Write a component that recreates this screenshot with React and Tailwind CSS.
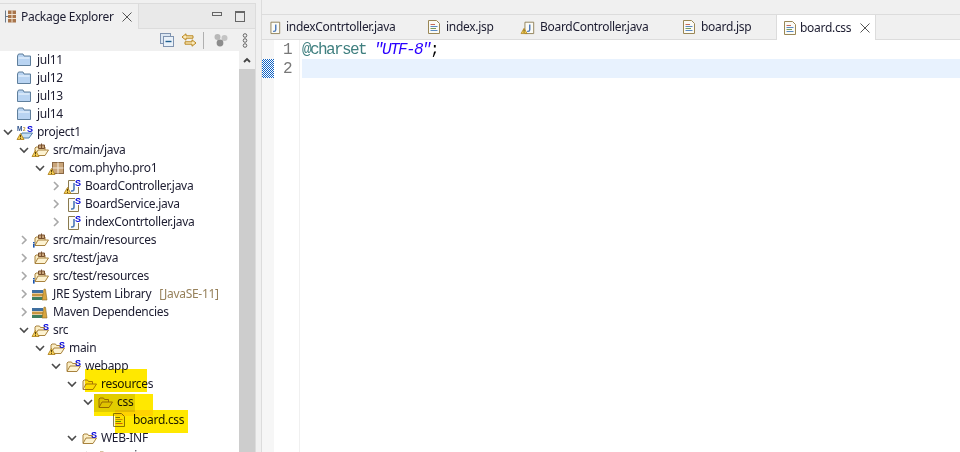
import React from "react";

const uiFont = "font-['Noto_Sans','Liberation_Sans',sans-serif]";

// decorators on the tree icons
const SBadge = ({ x = 11, y = 8 }) => (
  <text x={x} y={y} fontSize="9" fontWeight="700" fill="#0000d8" fontFamily="Liberation Sans, sans-serif">S</text>
);

const Warn = ({ x = 0, y = 9 }) => (
  <g transform={`translate(${x} ${y})`}>
    <path d="M3.5 0.5 L7 6.5 H0 Z" fill="#f5cf55" stroke="#a87a14" strokeWidth="0.8" />
    <path d="M3.5 2 V4.4 M3.5 5 V5.9" stroke="#4a3400" strokeWidth="0.9" />
  </g>
);

const Info = () => (
  <g>
    <rect x="1" y="10" width="1.6" height="1.4" fill="#1a55b0" />
    <rect x="1" y="12" width="1.6" height="3.6" fill="#1a55b0" />
  </g>
);

const FolderClosed = () => (
  <svg width="16" height="16" viewBox="0 0 16 16">
    <path d="M1.5 4 L2.5 2 H7 L8 4 H14.5 V13.5 H1.5 Z" fill="#b9d4f2" stroke="#5f7f9c" strokeWidth="1" />
    <rect x="2.5" y="5" width="11" height="2" fill="#d6e7f9" />
  </svg>
);

const FolderOpen = ({ s, warn, info }) => (
  <svg width="20" height="16" viewBox="0 0 20 16" className="overflow-visible">
    <path d="M3 13 V5 L4 4 H7.5 L8.5 5.5 H12.5 V8" fill="#fbeec5" stroke="#a8823e" strokeWidth="1" />
    <path d="M3 13.5 L6 8 H16.5 L13 13.5 Z" fill="#fdf3d2" stroke="#a8823e" strokeWidth="1" />
    {s && <SBadge />}
    {warn && <Warn x={0} y={8} />}
    {info && <Info />}
  </svg>
);

const SourceFolder = ({ warn, info }) => (
  <svg width="20" height="16" viewBox="0 0 20 16" className="overflow-visible">
    <path d="M3 13 V6 L4 5 H13 V8" fill="#fbeec5" stroke="#a8823e" strokeWidth="1" />
    <path d="M3 13.5 L6 8 H16.5 L13 13.5 Z" fill="#fdf3d2" stroke="#a8823e" strokeWidth="1" />
    <path d="M6.5 3 H12.5 V6.5 H6.5 Z M9.5 1.5 V6.5" fill="#c9a57a" stroke="#7a5230" strokeWidth="1" />
    {warn && <Warn x={0} y={8} />}
    {info && <Info />}
  </svg>
);

const PackageIcon = () => (
  <svg width="20" height="16" viewBox="0 0 20 16" className="overflow-visible">
    <rect x="4.5" y="2.5" width="11" height="11" fill="#c9a57a" stroke="#8a6844" strokeWidth="1" />
    <path d="M10 2.5 V13.5 M4.5 8 H15.5" stroke="#f2e6d6" strokeWidth="1.2" />
    <Warn x={0} y={8} />
  </svg>
);

const ProjectIcon = () => (
  <svg width="20" height="16" viewBox="0 0 20 16" className="overflow-visible">
    <text x="1" y="7" fontSize="6.5" fontWeight="700" fill="#2b4f8a" fontFamily="Liberation Sans, sans-serif">M</text>
    <text x="7" y="7" fontSize="4.5" fontWeight="700" fill="#b8861f" fontFamily="Liberation Sans, sans-serif">2</text>
    <path d="M3 14 L6 9 H16.5 L13 14 Z" fill="#c7dff5" stroke="#4f7ea8" strokeWidth="1" />
    <SBadge />
    <Warn x={1} y={9} />
  </svg>
);

const JavaFile = ({ warn, badge = true, w = 16 }) => (
  <svg width={w} height="16" viewBox="0 0 16 16" className="overflow-visible">
    <path d="M4.5 2.5 H14.5 V15.5 H4.5 Z" fill="#fbfbf6" stroke="#8a7a4f" strokeWidth="1" />
    <path d="M10 5 V11 Q10 13 8 13 H7" fill="none" stroke="#4a77b8" strokeWidth="1.6" />
    {badge && <rect x="11" y="1" width="5" height="8" fill="#ffffff" />}
    {badge && <SBadge />}
    {warn && <Warn x={0} y={9} />}
  </svg>
);

const TextFile = () => (
  <svg width="14" height="16" viewBox="0 0 14 16">
    <path d="M1.5 1.5 H9.5 L12.5 4.5 V14.5 H1.5 Z" fill="#fbfbf6" stroke="#9a8756" strokeWidth="1" />
    <path d="M3.5 5.5 H8" stroke="#c46a5a" strokeWidth="1" />
    <path d="M3.5 7.5 H10.5" stroke="#5a8ac4" strokeWidth="1" />
    <path d="M3.5 9.5 H9" stroke="#7a9a5a" strokeWidth="1" />
    <path d="M3.5 11.5 H10.5" stroke="#5a8ac4" strokeWidth="1" />
  </svg>
);

const CssFile = () => (
  <svg width="14" height="16" viewBox="0 0 14 16">
    <path d="M1.5 1.5 H9.5 L12.5 4.5 V14.5 H1.5 Z" fill="#fbf7da" stroke="#8a8256" strokeWidth="1" />
    <path d="M3.5 5.5 H8" stroke="#7a7a4a" strokeWidth="1" />
    <path d="M3.5 7.5 H10.5" stroke="#c79a2a" strokeWidth="1" />
    <path d="M3.5 9.5 H9" stroke="#5aa04a" strokeWidth="1" />
    <path d="M3.5 11.5 H10.5" stroke="#d06a3a" strokeWidth="1" />
  </svg>
);

const Library = () => (
  <svg width="18" height="16" viewBox="0 0 18 16" className="overflow-visible">
    <rect x="0" y="11" width="11" height="3" fill="#3f7f5f" />
    <rect x="0" y="7.5" width="11" height="3" fill="#c9963f" />
    <rect x="0" y="4" width="11" height="3" fill="#3f6f9f" />
    <path d="M10 14 L12 3 L13.5 3.3 L15 14 Z" fill="#d9a53f" stroke="#8a6a1f" strokeWidth="0.6" />
  </svg>
);

const ChevronDown = () => (
  <svg width="10" height="10" viewBox="0 0 10 10">
    <path d="M1 3 L5 7 L9 3" fill="none" stroke="#4a4a4a" strokeWidth="1.6" />
  </svg>
);

const ChevronRight = () => (
  <svg width="10" height="10" viewBox="0 0 10 10">
    <path d="M3 1 L7 5 L3 9" fill="none" stroke="#a8a8a8" strokeWidth="1.6" />
  </svg>
);

const treeRows = [
  { label: "jul11", level: 0, icon: <FolderClosed /> },
  { label: "jul12", level: 0, icon: <FolderClosed /> },
  { label: "jul13", level: 0, icon: <FolderClosed /> },
  { label: "jul14", level: 0, icon: <FolderClosed /> },
  { label: "project1", level: 0, open: true, icon: <ProjectIcon /> },
  { label: "src/main/java", level: 1, open: true, icon: <SourceFolder warn /> },
  { label: "com.phyho.pro1", level: 2, open: true, icon: <PackageIcon /> },
  { label: "BoardController.java", level: 3, closed: true, icon: <JavaFile warn /> },
  { label: "BoardService.java", level: 3, closed: true, icon: <JavaFile /> },
  { label: "indexContrtoller.java", level: 3, closed: true, icon: <JavaFile /> },
  { label: "src/main/resources", level: 1, closed: true, icon: <SourceFolder info /> },
  { label: "src/test/java", level: 1, closed: true, icon: <SourceFolder /> },
  { label: "src/test/resources", level: 1, closed: true, icon: <SourceFolder info /> },
  { label: "JRE System Library", extra: "[JavaSE-11]", level: 1, closed: true, icon: <Library /> },
  { label: "Maven Dependencies", level: 1, closed: true, icon: <Library /> },
  { label: "src", level: 1, open: true, icon: <FolderOpen s warn /> },
  { label: "main", level: 2, open: true, icon: <FolderOpen s warn /> },
  { label: "webapp", level: 3, open: true, icon: <FolderOpen s /> },
  { label: "resources", level: 4, open: true, icon: <FolderOpen /> },
  { label: "css", level: 5, open: true, icon: <FolderOpen /> },
  { label: "board.css", level: 6, icon: <CssFile /> },
  { label: "WEB-INF", level: 4, open: true, icon: <FolderOpen s /> },
  { label: "spring", level: 5, closed: true, icon: <FolderOpen /> },
];

const TreeRow = ({ row }) => (
  <div className="flex h-[18px] shrink-0 items-center" style={{ paddingLeft: row.level * 16 + 3 }}>
    <span className="flex w-[13px] shrink-0 justify-start">
      {row.open && <ChevronDown />}
      {row.closed && <ChevronRight />}
    </span>
    <span className="flex w-[21px] shrink-0 items-center justify-start">{row.icon}</span>
    <span className="whitespace-nowrap text-[12px] leading-[18px] tracking-[-0.3px] text-[#1c1c30]">
      {row.label}
      {row.extra && <span className="ml-[8px] text-[#96805a]">{row.extra}</span>}
    </span>
  </div>
);

const editorTabs = [
  { label: "indexContrtoller.java", width: "w-[160px]", icon: <JavaFile badge={false} w={14} /> },
  { label: "index.jsp", width: "w-[94px]", icon: <TextFile /> },
  { label: "BoardController.java", width: "w-[161px]", icon: <JavaFile badge={false} warn w={14} /> },
  { label: "board.jsp", width: "w-[99px]", icon: <TextFile /> },
];

const CloseIcon = ({ size = 10 }) => (
  <svg width={size} height={size} viewBox="0 0 10 10">
    <path d="M0.5 0.5 L9.5 9.5 M9.5 0.5 L0.5 9.5" stroke="#555555" strokeWidth="1" />
  </svg>
);

export default function App() {
  return (
    <div className={`flex h-[452px] w-[960px] overflow-hidden bg-[#f0f0f0] ${uiFont}`}>
      {/* Package Explorer */}
      <aside className="flex w-[256px] shrink-0 flex-col pt-[3px]">
        <div className="flex h-[26px] shrink-0 border-y border-r border-[#dcdcdc] bg-[#e9e9e9]">
          <div className="-mb-px flex w-[139px] shrink-0 items-center border-r border-[#dcdcdc] bg-[#f0f0f0] pl-[5px]">
            <svg width="11" height="13" viewBox="0 0 11 13" className="shrink-0">
              <path d="M0.5 0.5 V12.5 M0.5 6.5 H3" stroke="#6a7a8a" strokeWidth="1" />
              <rect x="3" y="0.5" width="8" height="12" fill="#a8744a" />
              <path d="M7 0.5 V12.5 M3 4.5 H11 M3 8.5 H11" stroke="#f0e4d4" strokeWidth="1" />
            </svg>
            <span className="ml-[5px] whitespace-nowrap text-[12px] tracking-[-0.3px] text-[#1c1c30]">Package Explorer</span>
            <span className="ml-[8px]"><CloseIcon /></span>
          </div>
          <div className="flex flex-1 items-start gap-[13px] pl-[73px] pt-[7px]">
            <div className="mt-[1px] h-[4px] w-[10px] border border-[#666666]" />
            <div className="h-[11px] w-[10px] border border-[#666666] border-t-2" />
          </div>
        </div>

        <div className="flex h-[22px] shrink-0 items-center border-r border-[#dcdcdc] pl-[160px]">
          <svg width="14" height="14" viewBox="0 0 14 14">
            <rect x="0.5" y="0.5" width="10" height="10" fill="#dbe6f2" stroke="#7f93b0" />
            <rect x="3.5" y="3.5" width="10" height="10" fill="#e9f1f9" stroke="#7f93b0" />
            <path d="M5.5 8.5 H11.5" stroke="#1f5f8f" strokeWidth="1.4" />
          </svg>
          <svg width="16" height="14" viewBox="0 0 16 14" className="ml-[7px]">
            <path d="M1 4 L5 0.8 V2.8 H12 V5.2 H5 V7.2 Z" fill="#fbe9b8" stroke="#b8861f" strokeWidth="1" />
            <path d="M15 10 L11 6.8 V8.8 H4 V11.2 H11 V13.2 Z" fill="#fbe9b8" stroke="#b8861f" strokeWidth="1" />
          </svg>
          <div className="ml-[6px] h-[17px] w-px bg-[#b0b0b0]" />
          <svg width="14" height="14" viewBox="0 0 14 14" className="ml-[10px]">
            <circle cx="3.5" cy="4" r="3" fill="#b8b8b8" />
            <circle cx="10.5" cy="5" r="3" fill="#c4c4c4" />
            <circle cx="6" cy="10" r="3.4" fill="#8c8c8c" />
          </svg>
          <svg width="6" height="15" viewBox="0 0 6 15" className="ml-[14px]">
            <circle cx="3" cy="2.5" r="1.8" fill="none" stroke="#666666" />
            <circle cx="3" cy="7.5" r="1.8" fill="none" stroke="#666666" />
            <circle cx="3" cy="12.5" r="1.8" fill="none" stroke="#666666" />
          </svg>
        </div>

        <div className="flex min-h-0 flex-1 border-r border-[#dcdcdc]">
          <div className="relative w-[239px] shrink-0 overflow-hidden bg-white">
            {treeRows.map((row) => (
              <TreeRow key={row.label} row={row} />
            ))}
            {/* gray selection + marker strokes drawn on the screenshot */}
            <div className="absolute left-[94px] top-[343px] h-[18px] w-[41px] bg-[#e2e2e2] mix-blend-multiply" />
            <div className="absolute left-[85px] top-[318px] h-[23px] w-[62px] bg-[#ffe800] mix-blend-multiply" />
            <div className="absolute left-[94px] top-[343px] h-[22px] w-[59px] bg-[#ffe800] mix-blend-multiply" />
            <div className="absolute left-[115px] top-[359px] h-[23px] w-[73px] bg-[#ffe800] mix-blend-multiply" />
          </div>
          <div className="flex flex-1 flex-col">
            <div className="flex h-[18px] shrink-0 items-center justify-center">
              <svg width="8" height="6" viewBox="0 0 8 6">
                <path d="M1 5 L4 2 L7 5" fill="none" stroke="#444444" strokeWidth="1.8" />
              </svg>
            </div>
            <div className="flex-1 bg-[#cdcdcd]" />
          </div>
        </div>
      </aside>

      <div className="w-[5px] shrink-0" />

      {/* Editor */}
      <main className="flex min-w-0 flex-1 flex-col border-l border-[#dcdcdc] pt-[14px]">
        <div className="flex h-[26px] shrink-0 border-y border-[#dcdcdc] bg-[#f0f0f0]">
          {editorTabs.map((tab) => (
            <div key={tab.label} className={`flex ${tab.width} shrink-0 items-center gap-[3px] pl-[5px]`}>
              <span className="flex w-[14px] justify-center">{tab.icon}</span>
              <span className="ml-[2px] whitespace-nowrap text-[12px] tracking-[-0.3px] text-[#1c1c30]">{tab.label}</span>
            </div>
          ))}
          <div className="-mb-px flex w-[100px] shrink-0 items-center border-x border-[#dcdcdc] bg-white pl-[6px]">
            <TextFile />
            <span className="ml-[3px] whitespace-nowrap text-[12px] tracking-[-0.3px] text-[#1c1c30]">board.css</span>
            <span className="ml-[9px]"><CloseIcon /></span>
          </div>
        </div>
        <div className="flex min-h-0 flex-1 bg-white font-['Liberation_Mono',monospace] text-[16px] leading-[21px] tracking-[-1.6px]">
          <div className="flex w-[12px] shrink-0 flex-col bg-[#f6f6f6]">
            <div className="h-[19px]" />
            <div className="h-[19px] bg-[repeating-conic-gradient(#0f62c4_0_25%,#ffffff_0_50%)] bg-[length:2px_2px]" />
          </div>
          <div className="w-[26px] shrink-0 border-r border-[#f0f0f0] pr-[8px] text-right text-[#787878]">
            <div className="h-[19px]">1</div>
            <div className="h-[19px]">2</div>
          </div>
          <div className="min-w-0 flex-1 pl-[2px]">
            <div className="h-[19px] whitespace-pre">
              <span className="text-[#3f7f7f]">@charset</span>
              <span> </span>
              <span className="italic text-[#2a00ff]">"UTF-8"</span>
              <span className="text-black">;</span>
            </div>
            <div className="h-[19px] bg-[#e8f2fe]" />
          </div>
        </div>
      </main>
    </div>
  );
}
